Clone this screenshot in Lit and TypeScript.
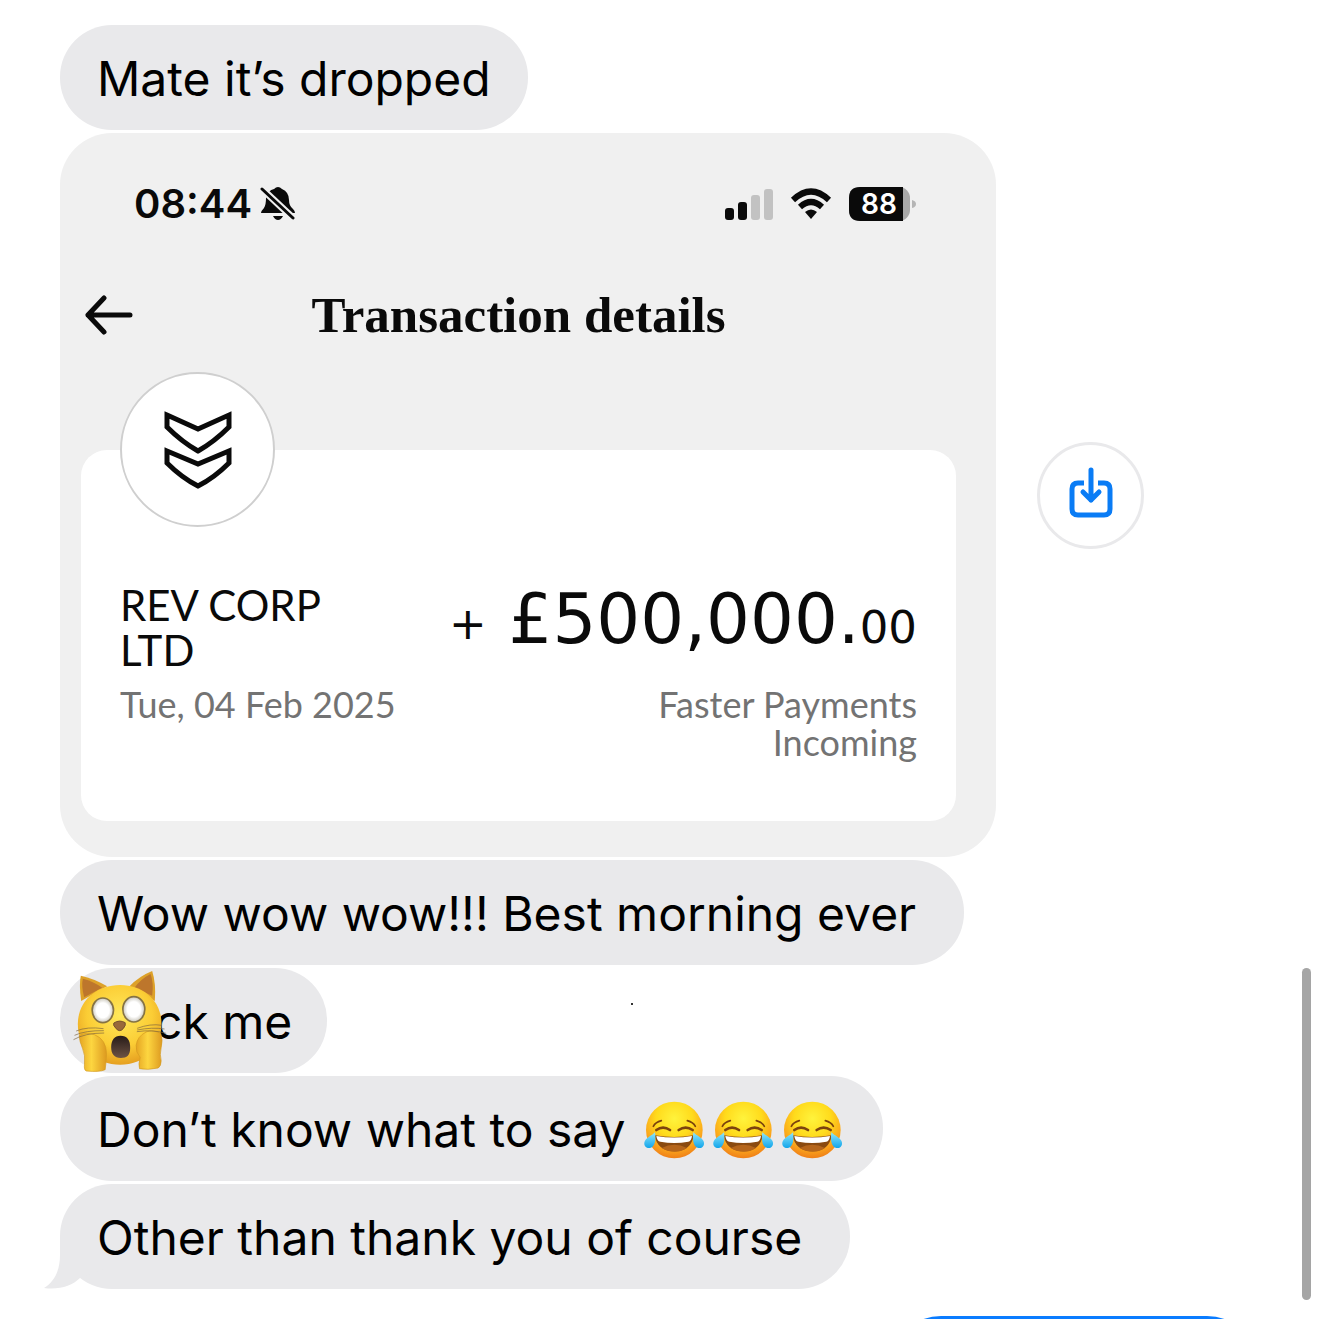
import { LitElement, html, css, svg } from 'lit';
import { customElement, property } from 'lit/decorators.js';

const joy = html`
  <svg class="joy" viewBox="0 0 180 174" role="img" aria-label="face with tears of joy">
    <defs>
      <radialGradient id="joy-skin" cx="50%" cy="30%" r="72%">
        <stop offset="0" stop-color="#fff33c" />
        <stop offset="0.45" stop-color="#ffdb1c" />
        <stop offset="0.75" stop-color="#fba81c" />
        <stop offset="1" stop-color="#ee7a18" />
      </radialGradient>
      <linearGradient id="joy-tear" x1="0" y1="0" x2="0" y2="1">
        <stop offset="0" stop-color="#8fe6fb" />
        <stop offset="1" stop-color="#12a5ea" />
      </linearGradient>
    </defs>
    <circle cx="91" cy="87" r="85" fill="url(#joy-skin)" />
    <path d="M32 103 Q90 113 149 103 Q142 151 91 151 Q40 151 32 103Z" fill="#8a4a10" />
    <path d="M37 105 Q90 114 144 105 Q142 121 133 122 Q91 130 49 122 Q39 121 37 105Z" fill="#fff" />
    <path d="M53 141 Q91 122 129 141 Q112 153 91 152 Q70 152 53 141Z" fill="#b5651b" />
    <g fill="none" stroke="#7c430e" stroke-linecap="round">
      <path d="M37 87 Q57 73 78 87" stroke-width="8" />
      <path d="M104 87 Q125 73 146 87" stroke-width="8" />
      <path d="M28 76 Q34 64 52 59" stroke-width="5" />
      <path d="M130 59 Q148 64 154 76" stroke-width="5" />
    </g>
    <path d="M33 94 C36 115 34 137 18 141 C4 143 -3 130 3 119 C9 109 22 105 33 94Z" fill="url(#joy-tear)" />
    <path d="M148 94 C145 115 147 137 163 141 C177 143 184 130 178 119 C172 109 159 105 148 94Z" fill="url(#joy-tear)" />
  </svg>
`;

const wearyCat = html`
  <svg class="cat" viewBox="0 0 290 315" role="img" aria-label="weary cat">
    <defs>
      <radialGradient id="cat-fur" cx="50%" cy="38%" r="65%">
        <stop offset="0" stop-color="#ffe85a" />
        <stop offset="0.6" stop-color="#fbcd35" />
        <stop offset="1" stop-color="#e39a1e" />
      </radialGradient>
      <linearGradient id="cat-paw" x1="0" y1="0" x2="1" y2="0">
        <stop offset="0" stop-color="#e5a522" />
        <stop offset="0.45" stop-color="#fdd640" />
        <stop offset="1" stop-color="#dd9a20" />
      </linearGradient>
      <radialGradient id="cat-eye">
        <stop offset="0.6" stop-color="#fff" />
        <stop offset="1" stop-color="#c9c6bb" />
      </radialGradient>
      <linearGradient id="cat-mouth" x1="0" y1="0" x2="0" y2="1">
        <stop offset="0" stop-color="#261b18" />
        <stop offset="1" stop-color="#6d5244" />
      </linearGradient>
    </defs>
    <path d="M27 96 Q20 44 26 20 Q65 28 105 52Z" fill="#dda129" />
    <path d="M248 96 Q252 42 240 6 Q200 22 172 52Z" fill="#dda129" />
    <path d="M36 85 Q27 51 32 29 Q64 37 90 56Z" fill="#bd762c" />
    <path d="M240 80 Q245 40 235 15 Q206 30 187 56Z" fill="#bd762c" />
    <path d="M144 48 C217 48 268 99 268 164 C268 238 215 287 144 287 C72 287 17 238 17 165 C17 98 70 48 144 48Z" fill="url(#cat-fur)" />
    <g fill="url(#cat-eye)" stroke="#857344" stroke-width="5">
      <ellipse cx="92" cy="124" rx="32" ry="37" />
      <ellipse cx="185" cy="121" rx="33" ry="38" />
    </g>
    <path d="M125 162 Q142 151 159 161 Q162 169 153 179 Q143 191 132 179 Q121 168 125 162Z" fill="#99683a" stroke="#74502c" stroke-width="3" />
    <path d="M145 200 C165 200 175 213 174 237 C174 258 165 267 146 267 C126 267 117 255 117 235 C117 213 127 200 145 200Z" fill="url(#cat-mouth)" />
    <path d="M21 200 Q43 188 67 197 Q103 211 103 256 Q102 281 99 302 Q81 310 42 306 Q35 303 37 286 Q40 258 31 238 Q22 218 21 200Z" fill="url(#cat-paw)" stroke="#d39a20" stroke-width="2" />
    <path d="M266 194 Q244 180 222 189 Q195 202 192 229 Q190 250 204 265 Q198 286 202 299 Q226 304 258 297 Q267 292 267 275 Q262 257 267 236 Q273 213 266 194Z" fill="url(#cat-paw)" stroke="#d39a20" stroke-width="2" />
    <g fill="none" stroke="#7c6440" stroke-width="2">
      <path d="M94 179 Q45 172 12 186" />
      <path d="M95 185 Q40 184 7 199" />
      <path d="M96 192 Q38 192 4 212" />
      <path d="M195 178 Q235 163 269 169" />
      <path d="M195 183 Q240 174 277 180" />
      <path d="M194 188 Q240 181 282 193" />
    </g>
  </svg>
`;

const emojis = { joy, cat: wearyCat };

@customElement('chat-bubble')
export class ChatBubble extends LitElement {
  static styles = css`
    :host {
      display: block;
      max-width: 80%;
    }
    .bubble {
      position: relative;
      display: flex;
      align-items: center;
      padding: 22px 37px 20px;
      border-radius: 52px;
      background: #e9e9eb;
      color: #000;
      line-height: 63px;
    }
    .leading {
      padding: 22px 35px 20px 12px;
    }
    .leading .text {
      margin-left: -14px;
    }
    .roomy {
      padding-right: 48px;
    }
    .text {
      position: relative;
      margin: 0;
    }
    .cat {
      position: relative;
      z-index: 1;
      flex: none;
      width: 97px;
      height: 105px;
      margin: -21px 0;
    }
    .trail {
      display: flex;
      gap: 9px;
      margin: 0 4px 0 18px;
    }
    .joy {
      width: 60px;
      height: 58px;
    }
    .tail {
      position: absolute;
      left: -16px;
      bottom: 0;
      width: 60px;
      height: 60px;
    }
  `;

  @property() text = '';
  @property() lead = '';
  @property({ type: Number }) laughs = 0;
  @property({ type: Boolean }) tail = false;
  @property({ type: Boolean }) roomy = false;

  render() {
    return html`
      <div class="bubble ${this.lead ? 'leading' : ''} ${this.roomy ? 'roomy' : ''}">
        ${this.tail ? html`
          <svg class="tail" viewBox="0 0 60 60" aria-hidden="true">
            <path d="M16 6 V26 C16 42 10 53 0 59 C15 61 28 57 36 49 L60 40 V6Z" fill="#e9e9eb" />
          </svg>` : null}
        ${this.lead ? emojis[this.lead] : null}
        <p class="text">${this.text}</p>
        ${this.laughs ? html`<span class="trail">${Array.from({ length: this.laughs }, () => emojis.joy)}</span>` : null}
      </div>
    `;
  }
}

@customElement('transaction-card')
export class TransactionCard extends LitElement {
  static styles = css`
    :host {
      display: block;
    }
    .card {
      padding: 47px 40px 36px 21px;
      border-radius: 52px;
      background: #f0f0f0;
      color: #0a0a0a;
      font-family: Lato, sans-serif;
    }
    .status {
      display: flex;
      align-items: center;
      justify-content: space-between;
      height: 48px;
      padding: 0 40px 0 53px;
    }
    .clock,
    .signals {
      display: flex;
      align-items: center;
    }
    .clock {
      gap: 8px;
      font: 600 40px/48px Inter, sans-serif;
    }
    .signals {
      gap: 17px;
    }
    .bar {
      display: grid;
      grid-template-columns: 56px 1fr 56px;
      align-items: center;
      margin-top: 59px;
    }
    .back {
      display: flex;
      padding: 0 0 0 3px;
      border: 0;
      background: none;
      color: inherit;
    }
    .title {
      margin: 0;
      text-align: center;
      font: 700 51px/56px 'Liberation Serif', serif;
    }
    .panel {
      display: flex;
      flex-direction: column;
      margin-top: 107px;
      padding: 0 39px 60px;
      border-radius: 26px;
      background: #fff;
    }
    .logo {
      display: grid;
      place-items: center;
      box-sizing: border-box;
      width: 155px;
      height: 155px;
      margin-top: -78px;
      border: 2px solid #cfcfcf;
      border-radius: 50%;
      background: #fff;
    }
    .details {
      display: grid;
      grid-template-columns: 1fr auto;
      row-gap: 12px;
      margin-top: 56px;
    }
    .details p {
      margin: 0;
    }
    .payee {
      max-width: 240px;
      font-size: 42px;
      line-height: 45px;
    }
    .amount {
      font-family: 'DejaVu Sans', sans-serif;
      font-size: 69px;
      line-height: 72px;
      text-align: right;
      white-space: nowrap;
    }
    .sign,
    .pence {
      font-size: 45px;
    }
    .sign {
      vertical-align: middle;
    }
    .muted {
      color: #737373;
      font-size: 36px;
      line-height: 38px;
    }
    .kind {
      justify-self: end;
      max-width: 300px;
      text-align: right;
    }
  `;

  render() {
    return html`
      <article class="card">
        <div class="status">
          <span class="clock">
            08:44
            <svg width="36" height="36" viewBox="0 0 36 36" role="img" aria-label="silent">
              <path d="M1 27 Q1 25 4 22 Q6 19 6 12 Q8 4 14 3 Q18 -1 22 3 Q29 6 29 14 Q29 20 33 23 Q35 25 35 27Z" fill="#0a0a0a" />
              <path d="M13 30 H23 Q21 34 18 34 Q15 34 13 30Z" fill="#0a0a0a" />
              <path d="M1 2 L34 33" stroke="#f0f0f0" stroke-width="7" />
              <path d="M2 3 L33 32" stroke="#0a0a0a" stroke-width="3" stroke-linecap="round" />
            </svg>
          </span>
          <span class="signals">
            <svg width="48" height="32" viewBox="0 0 48 32" role="img" aria-label="signal">
              ${[[0, 12], [13, 18], [26, 25], [39, 31]].map(([x, h]) => svg`
                <rect x=${x} y=${32 - h} width="9" height=${h} rx="3" fill=${x < 20 ? '#0a0a0a' : '#c2c2c2'} />
              `)}
            </svg>
            <svg width="42" height="32" viewBox="0 0 42 32" role="img" aria-label="wi-fi">
              <g fill="none" stroke="#0a0a0a" stroke-width="6">
                <path d="M3 12 Q21 -5 39 12" />
                <path d="M10 19 Q21 9 32 19" />
              </g>
              <path d="M15 24 Q21 19 27 24 L21 31Z" fill="#0a0a0a" />
            </svg>
            <svg width="67" height="34" viewBox="0 0 67 34" role="img" aria-label="battery 88 percent">
              <rect width="61" height="34" rx="11" fill="#a9a9a9" />
              <path d="M11 0 H54 V34 H11 Q0 34 0 23 V11 Q0 0 11 0Z" fill="#0a0a0a" />
              <path d="M63 13 Q67 14 67 17 Q67 20 63 21Z" fill="#b5b5b5" />
              <text x="30" y="27" fill="#fff" font-family="Inter, sans-serif" font-size="28" font-weight="600" text-anchor="middle">88</text>
            </svg>
          </span>
        </div>
        <header class="bar">
          <button class="back" aria-label="Back">
            <svg width="50" height="40" viewBox="0 0 50 40" fill="none" stroke="currentColor" stroke-width="5" stroke-linecap="round" stroke-linejoin="round">
              <path d="M20 3 L4 20 L20 37 M4 20 H46" />
            </svg>
          </button>
          <h2 class="title">Transaction details</h2>
        </header>
        <section class="panel">
          <div class="logo">
            <svg width="68" height="80" viewBox="0 0 68 80" fill="none" stroke="#0a0a0a" stroke-width="5" aria-hidden="true">
              <path d="M3 5 L34 19 L65 5 V17 Q50 32 34 41 Q18 32 3 17Z" />
              <path d="M3 41 L34 54 L65 41 V53 Q50 68 34 76 Q18 68 3 53Z" />
            </svg>
          </div>
          <div class="details">
            <p class="payee">REV CORP<br />LTD</p>
            <p class="amount"><span class="sign">+</span> £500,000.<span class="pence">00</span></p>
            <p class="muted">Tue, 04 Feb 2025</p>
            <p class="muted kind">Faster Payments Incoming</p>
          </div>
        </section>
      </article>
    `;
  }
}

@customElement('app-root')
export class AppRoot extends LitElement {
  static styles = css`
    :host {
      position: relative;
      display: block;
      box-sizing: border-box;
      height: 100vh;
      overflow: hidden;
      padding: 25px 60px 0;
      background: #fff;
      font: 400 48px/63px Inter, sans-serif;
    }
    .thread {
      display: flex;
      flex-direction: column;
      align-items: flex-start;
      gap: 3px;
    }
    .attachment {
      display: flex;
      align-items: center;
      gap: 41px;
      width: 100%;
    }
    .shot {
      flex: 0 1 936px;
    }
    .save {
      display: grid;
      place-items: center;
      flex: none;
      width: 107px;
      height: 107px;
      padding: 0;
      border: 3px solid #e9e9eb;
      border-radius: 50%;
      background: #fff;
      color: #0a7cf5;
    }
    .sent {
      align-self: flex-end;
      width: 370px;
      height: 105px;
      margin-top: 24px;
      border-radius: 52px;
      background: #0a7cff;
    }
    .speck {
      position: absolute;
      left: 631px;
      top: 1003px;
      width: 2px;
      height: 2px;
      background: #333;
    }
    .scroll-thumb {
      position: absolute;
      right: 8px;
      bottom: 19px;
      width: 9px;
      height: 332px;
      border-radius: 5px;
      background: #a5a5a5;
    }
  `;

  render() {
    return html`
      <main class="thread">
        <chat-bubble text="Mate it’s dropped"></chat-bubble>
        <div class="attachment">
          <transaction-card class="shot"></transaction-card>
          <button class="save" aria-label="Save image">
            <svg width="44" height="56" viewBox="0 2 44 56" fill="none" stroke="currentColor" stroke-linecap="round" stroke-linejoin="round">
              <path d="M15 18 H9 Q3 18 3 24 V44 Q3 50 9 50 H35 Q41 50 41 44 V24 Q41 18 35 18 H29" stroke-width="5" stroke-linecap="butt" />
              <path d="M22 5 V35 M14 27 L22 35 L30 27" stroke-width="5" />
            </svg>
          </button>
        </div>
        <chat-bubble text="Wow wow wow!!! Best morning ever" roomy></chat-bubble>
        <chat-bubble lead="cat" text="ck me"></chat-bubble>
        <chat-bubble text="Don’t know what to say" laughs="3"></chat-bubble>
        <chat-bubble text="Other than thank you of course" tail roomy></chat-bubble>
        <div class="sent"></div>
      </main>
      <span class="speck"></span>
      <div class="scroll-thumb"></div>
    `;
  }
}
